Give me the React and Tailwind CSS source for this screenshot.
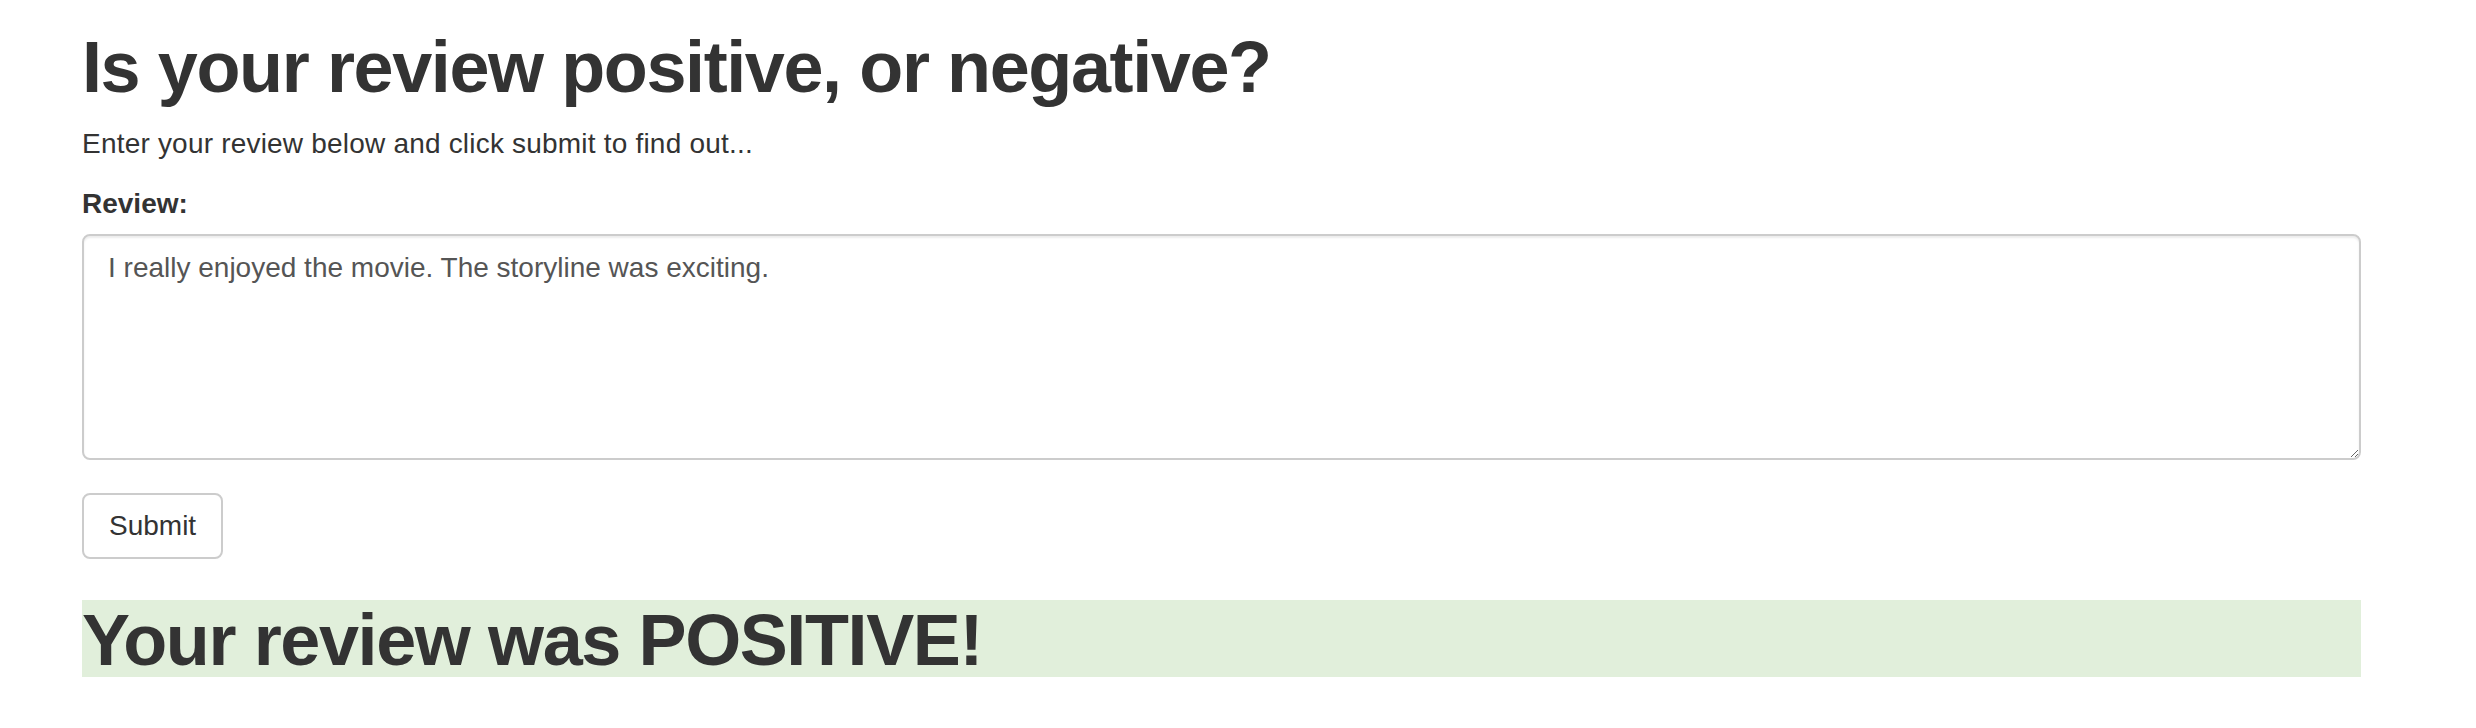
export default function App() {
  return (
    <div className="min-h-screen bg-white font-['Liberation_Sans',Arial,sans-serif] text-[28px] leading-[40px] text-[#333]">
      <div className="ml-[82px] w-[2279px]">
        <h1 className="mt-[28px] mb-[17px] text-[72px] leading-[79px] font-bold tracking-[-1.4px]">
          Is your review positive, or negative?
        </h1>
        <p className="mb-[20px] tracking-[0.2px]">Enter your review below and click submit to find out...</p>

        <form onSubmit={(e) => e.preventDefault()}>
          <div className="mb-[33px]">
            <label htmlFor="review" className="block mb-[10px] font-bold">
              Review:
            </label>
            <textarea
              id="review"
              rows={4}
              defaultValue="I really enjoyed the movie. The storyline was exciting."
              className="block w-full h-[226px] px-[24px] py-[12px] border-2 border-[#ccc] rounded-[8px] bg-white text-[28px] leading-[40px] text-[#555] shadow-[inset_0_2px_2px_rgba(0,0,0,0.075)] outline-none"
            />
          </div>
          <button
            type="submit"
            className="flex items-center h-[66px] px-[25px] border-2 border-[#ccc] rounded-[8px] bg-white text-[28px] text-[#333]"
          >
            Submit
          </button>
        </form>

        <h1 className="mt-[41px] h-[77px] pt-[4px] bg-[#e1efdb] text-[72px] leading-[73px] font-bold tracking-[-1.4px]">
          Your review was POSITIVE!
        </h1>
      </div>
    </div>
  );
}
